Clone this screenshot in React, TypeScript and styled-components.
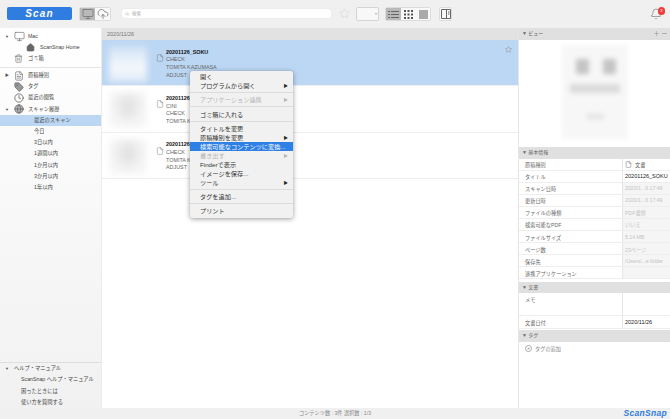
import styled, { createGlobalStyle } from 'styled-components';
import { Bell, CloudUpload, File, FileText, House, Minus, Monitor, Plus, Search, Star, Tag, Trash2, Clock, Globe } from 'lucide-react';

const GlobalStyle = createGlobalStyle`
  html, body {
    margin: 0;
    padding: 0;
    background: #fff;
  }
  * {
    box-sizing: border-box;
  }
  body {
    font-family: 'Liberation Sans', 'Noto Sans CJK JP', sans-serif;
    color: #444;
  }
`;

const Window = styled.div`
  position: relative;
  width: 670px;
  height: 419px;
  overflow: hidden;
  display: flex;
  flex-direction: column;
`;

/* toolbar */
const Toolbar = styled.header`
  height: 28px;
  flex: none;
  padding: 7px 4px 0 7px;
  background: #f0f0f0;
  display: flex;
  align-items: flex-start;
`;

const ScanButton = styled.div`
  width: 65px;
  height: 13px;
  border-radius: 2px;
  background: #2f7de0;
  color: #fff;
  font-size: 10px;
  line-height: 13px;
  font-weight: 700;
  font-style: italic;
  letter-spacing: 1.2px;
  text-align: center;
`;

const Segment = styled.div<{ $ml: number }>`
  height: 14px;
  margin-left: ${(p) => p.$ml}px;
  border: 1px solid #dcdcdc;
  border-radius: 2px;
  background: #f8f8f8;
  display: flex;
`;

const SegmentCell = styled.div<{ $on?: boolean; $w: number }>`
  width: ${(p) => p.$w}px;
  background: ${(p) => (p.$on ? '#b9b9b9' : '#f8f8f8')};
  color: #666;
  display: flex;
  align-items: center;
  justify-content: center;
`;

const SearchBox = styled.div`
  width: 209px;
  height: 9px;
  margin-left: 11px;
  margin-top: 2px;
  border-radius: 2px;
  background: #fff;
  box-shadow: 0 0 1px #ccc;
  padding-left: 3px;
  font-size: 4.5px;
  line-height: 9px;
  color: #aaa;
  display: flex;
  align-items: center;
  gap: 3px;
`;

const ToolStar = styled.div`
  margin-left: 8px;
  margin-top: 1px;
  color: #d8d8d8;
  display: flex;
`;

const SelectBox = styled.div`
  width: 23px;
  height: 14px;
  margin-left: 6px;
  border: 1px solid #d4d4d4;
  border-radius: 2px;
  background: #f8f8f8;
  color: #aaa;
  font-size: 4px;
  line-height: 12px;
  text-align: right;
  padding-right: 1px;
`;

const BellWrap = styled.div`
  position: relative;
  margin-left: auto;
  margin-top: 1px;
  margin-right: 4px;
  color: #777;
  display: flex;
`;

const Badge = styled.span`
  position: absolute;
  top: -1px;
  right: -3px;
  width: 7.5px;
  height: 7.5px;
  border-radius: 50%;
  background: #ee3b3b;
  color: #fff;
  font-size: 4px;
  line-height: 7.5px;
  text-align: center;
`;

/* three columns */
const Body = styled.div`
  flex: 1;
  min-height: 0;
  display: flex;
`;

const Sidebar = styled.aside`
  width: 102px;
  flex: none;
  background: linear-gradient(#ffffff, #f1f1f1);
  border-right: 1px solid #ececec;
  padding-top: 3px;
  display: flex;
  flex-direction: column;
`;

const NavRow = styled.div<{ $indent: number; $selected?: boolean }>`
  height: 11.2px;
  padding-left: ${(p) => p.$indent}px;
  background: ${(p) => (p.$selected ? '#bcd7f3' : 'transparent')};
  font-size: 5.25px;
  line-height: 11.2px;
  color: #444;
  white-space: nowrap;
  display: flex;
  align-items: center;
`;

const Arrow = styled.span`
  width: 9px;
  flex: none;
  font-size: 4px;
  color: #555;
`;

const NavIcon = styled.span`
  width: 14px;
  flex: none;
  color: #666;
  display: flex;
  align-items: center;
`;

const NavDivider = styled.div`
  height: 1px;
  margin: 2px 0 2.5px;
  background: #e4e4e4;
`;

const HelpBlock = styled.div`
  margin-top: auto;
  border-top: 1px solid #dedede;
  padding: 0.5px 0 0;
`;

const HelpHead = styled.div`
  padding: 0 0 0 5px;
`;

const Main = styled.main`
  flex: 1;
  min-width: 0;
  background: #fff;
`;

const DateBar = styled.div`
  height: 12px;
  padding-left: 5px;
  background: #e2e2e2;
  color: #777;
  font-size: 5.5px;
  line-height: 12px;
`;

const Item = styled.div<{ $selected?: boolean }>`
  position: relative;
  height: 46.4px;
  padding: 6px 0 0 7px;
  background: ${(p) => (p.$selected ? '#bcd7f3' : '#fff')};
  border-bottom: 1px solid #eeeeee;
  display: flex;
`;

const Thumb = styled.div<{ $selected?: boolean }>`
  width: 38px;
  height: 36px;
  flex: none;
  background: ${(p) =>
    p.$selected
      ? 'linear-gradient(#cfe1f5, #e4eef9 30%, #f4f8fc 60%, #dfeaf7)'
      : 'radial-gradient(ellipse at 50% 40%, #dfdfdf, #f3f3f3 55%, #fbfbfb)'};
  filter: blur(3px);
`;

const DocIcon = styled.div`
  width: 8px;
  margin-left: 9px;
  padding-top: 2px;
  flex: none;
  color: #777;
`;

const ItemText = styled.div`
  margin-left: 2px;
  padding-top: 2.5px;
  font-size: 5.4px;
  line-height: 7.7px;
  color: #666;
  white-space: nowrap;
`;

const ItemTitle = styled.div`
  color: #111;
  font-weight: 700;
`;

const ItemStar = styled.div`
  position: absolute;
  top: 6px;
  right: 6px;
  color: #888;
  display: flex;
`;

/* right pane */
const Inspector = styled.aside`
  width: 152px;
  flex: none;
  border-left: 1px solid #e6e6e6;
  background: #fff;
`;

const SectionHead = styled.div<{ $mt?: number }>`
  height: 11.5px;
  margin-top: ${(p) => p.$mt ?? 0}px;
  padding: 0 2px 0 3px;
  background: #e0e0e0;
  color: #666;
  font-size: 5px;
  line-height: 11.5px;
  display: flex;
  align-items: center;
  gap: 2px;
`;

const HeadTools = styled.span`
  margin-left: auto;
  color: #888;
  display: flex;
  gap: 1px;
`;

const Preview = styled.div`
  height: 106px;
  padding-top: 5px;
  display: flex;
  justify-content: center;
`;

const Page = styled.div`
  position: relative;
  width: 66px;
  height: 94px;
  background: #f7f7f7;
  filter: blur(2.5px);
`;

const Smudge = styled.span<{ $x: number; $y: number; $w: number; $h: number; $c: string }>`
  position: absolute;
  left: ${(p) => p.$x}px;
  top: ${(p) => p.$y}px;
  width: ${(p) => p.$w}px;
  height: ${(p) => p.$h}px;
  background: ${(p) => p.$c};
`;

const InfoRow = styled.div<{ $h?: number }>`
  height: ${(p) => p.$h ?? 12.1}px;
  border-bottom: 1px solid #eeeeee;
  font-size: 5.2px;
  color: #666;
  display: grid;
  grid-template-columns: 103px 1fr;
`;

const InfoLabel = styled.div`
  padding: 2.5px 0 0 6px;
  white-space: nowrap;
`;

const InfoValue = styled.div<{ $dim?: boolean; $dark?: boolean }>`
  padding: 2.5px 0 0 2px;
  border-left: 1px solid #e6e6e6;
  background: ${(p) => (p.$dim ? '#f5f5f5' : '#fff')};
  color: ${(p) => (p.$dark ? '#222' : p.$dim ? '#c4c4c4' : '#555')};
  font-size: ${(p) => (p.$dark ? 5.5 : 5.2)}px;
  white-space: nowrap;
  overflow: hidden;
  display: flex;
  gap: 3px;
`;

const AddTag = styled.div`
  padding: 3px 0 0 6px;
  color: #888;
  font-size: 5.2px;
  display: flex;
  align-items: center;
  gap: 3px;
`;

const PlusDot = styled.span`
  width: 7px;
  height: 7px;
  border: 1px solid #aaa;
  border-radius: 50%;
  font-size: 5px;
  line-height: 5px;
  text-align: center;
`;

const StatusBar = styled.footer`
  position: relative;
  height: 11px;
  flex: none;
  background: #f0f0f0;
  color: #888;
  font-size: 5.2px;
  line-height: 11px;
  text-align: center;
`;

const Logo = styled.span`
  position: absolute;
  right: 3px;
  top: 0;
  color: #2f7de0;
  font-size: 8.5px;
  font-weight: 700;
  font-style: italic;
  letter-spacing: 0.3px;
`;

/* context menu */
const Menu = styled.div`
  position: absolute;
  left: 190px;
  top: 71px;
  width: 103px;
  height: 147px;
  padding-top: 1px;
  border-radius: 3px;
  background: #f1f1f1;
  box-shadow: 0 1px 5px rgba(0, 0, 0, 0.4);
`;

const MenuRow = styled.div<{ $active?: boolean; $disabled?: boolean }>`
  height: 9px;
  padding: 0 5px 0 10px;
  background: ${(p) => (p.$active ? '#2f80e4' : 'transparent')};
  color: ${(p) => (p.$active ? '#fff' : p.$disabled ? '#b5b5b5' : '#333')};
  font-size: 6.2px;
  line-height: 9px;
  white-space: nowrap;
  overflow: hidden;
  display: flex;
  justify-content: space-between;
`;

const Caret = styled.span<{ $disabled?: boolean }>`
  font-size: 4.5px;
  color: ${(p) => (p.$disabled ? '#b5b5b5' : '#222')};
`;

const MenuSep = styled.div`
  height: 1px;
  margin: 2.15px 0;
  background: #dcdcdc;
`;

const history = ['最近のスキャン', '今日', '3日以内', '1週間以内', '1か月以内', '3か月以内', '1年以内'];

const items = [
  { lines: ['CHECK', 'TOMITA KAZUMASA', 'ADJUST'], selected: true },
  { lines: ['CINI', 'CHECK', 'TOMITA KAZUMASA'], selected: false },
  { lines: ['CHECK', 'TOMITA KAZUMASA', 'ADJUST'], selected: false },
];

const info = [
  ['タイトル', '20201126_SOKU', 'dark'],
  ['スキャン日時', '2020/1...6 17:49', 'dim'],
  ['更新日時', '2020/1...6 17:49', 'dim'],
  ['ファイルの種類', 'PDF書類', 'dim'],
  ['検索可能なPDF', 'いいえ', 'dim'],
  ['ファイルサイズ', '5.14 MB', 'dim'],
  ['ページ数', '23ページ', 'dim'],
  ['保存先', '/Users/...e folder', 'dim'],
  ['連携アプリケーション', '', 'dim'],
];

export default function App() {
  return (
    <Window>
      <GlobalStyle />
      <Toolbar>
        <ScanButton>Scan</ScanButton>
        <Segment $ml={7}>
          <SegmentCell $on $w={15}>
            <Monitor size={12} strokeWidth={1.3} />
          </SegmentCell>
          <SegmentCell $w={15}>
            <CloudUpload size={12} strokeWidth={1.4} />
          </SegmentCell>
        </Segment>
        <SearchBox>
          <Search size={4} strokeWidth={2} />
          検索
        </SearchBox>
        <ToolStar>
          <Star size={11} strokeWidth={1.5} />
        </ToolStar>
        <SelectBox>▾</SelectBox>
        <Segment $ml={6}>
          <SegmentCell $on $w={15}>
            <svg width="11" height="9" viewBox="0 0 11 9" fill="none" stroke="#666">
              <path d="M0 1.5h2M3 1.5h8M0 4.5h2M3 4.5h8M0 7.5h2M3 7.5h8" />
            </svg>
          </SegmentCell>
          <SegmentCell $w={15}>
            <svg width="9" height="9" viewBox="0 0 9 9" fill="#555">
              <path d="M0 0h2v2H0zM3.5 0h2v2h-2zM7 0h2v2H7zM0 3.5h2v2H0zM3.5 3.5h2v2h-2zM7 3.5h2v2H7zM0 7h2v2H0zM3.5 7h2v2h-2zM7 7h2v2H7z" />
            </svg>
          </SegmentCell>
          <SegmentCell $w={14}>
            <svg width="9" height="9" viewBox="0 0 9 9">
              <rect width="9" height="9" fill="#aaa" />
            </svg>
          </SegmentCell>
        </Segment>
        <Segment $ml={8}>
          <SegmentCell $w={11}>
            <svg width="10" height="10" viewBox="0 0 10 10" fill="none" stroke="#666">
              <path d="M.5.5h9v9h-9zM5.5.5v9" />
              <path d="M7 3h1.5M7 5h1.5" />
            </svg>
          </SegmentCell>
        </Segment>
        <BellWrap>
          <Bell size={12} strokeWidth={1.3} />
          <Badge>3</Badge>
        </BellWrap>
      </Toolbar>

      <Body>
        <Sidebar>
          <NavRow $indent={5}>
            <Arrow>▼</Arrow>
            <NavIcon>
              <Monitor size={11} strokeWidth={1.4} />
            </NavIcon>
            Mac
          </NavRow>
          <NavRow $indent={26}>
            <NavIcon>
              <House size={9} strokeWidth={2} fill="#666" />
            </NavIcon>
            ScanSnap Home
          </NavRow>
          <NavRow $indent={14}>
            <NavIcon>
              <Trash2 size={9} strokeWidth={1.6} />
            </NavIcon>
            ゴミ箱
          </NavRow>
          <NavDivider />
          <NavRow $indent={5}>
            <Arrow>▶</Arrow>
            <NavIcon>
              <FileText size={10} strokeWidth={1.6} />
            </NavIcon>
            原稿種別
          </NavRow>
          <NavRow $indent={14}>
            <NavIcon>
              <Tag size={10} strokeWidth={1.8} fill="#999" />
            </NavIcon>
            タグ
          </NavRow>
          <NavRow $indent={14}>
            <NavIcon>
              <Clock size={10} strokeWidth={2} />
            </NavIcon>
            最近の閲覧
          </NavRow>
          <NavRow $indent={5}>
            <Arrow>▼</Arrow>
            <NavIcon>
              <Globe size={10} strokeWidth={2} fill="#bbb" />
            </NavIcon>
            スキャン履歴
          </NavRow>
          {history.map((label, i) => (
            <NavRow key={label} $indent={34} $selected={i === 0}>
              {label}
            </NavRow>
          ))}
          <HelpBlock>
            <HelpHead>
              <NavRow $indent={0}>
                <Arrow>▼</Arrow>
                <span>ヘルプ・マニュアル</span>
              </NavRow>
            </HelpHead>
            <NavRow $indent={21}>ScanSnap ヘルプ・マニュアル</NavRow>
            <NavRow $indent={21}>困ったときには</NavRow>
            <NavRow $indent={21}>使い方を質問する</NavRow>
          </HelpBlock>
        </Sidebar>

        <Main>
          <DateBar>2020/11/26</DateBar>
          {items.map((item, i) => (
            <Item key={i} $selected={item.selected}>
              <Thumb $selected={item.selected} />
              <DocIcon>
                <File size={8} strokeWidth={1.4} />
              </DocIcon>
              <ItemText>
                <ItemTitle>20201126_SOKU</ItemTitle>
                {item.lines.map((line) => (
                  <div key={line}>{line}</div>
                ))}
              </ItemText>
              {item.selected && (
                <ItemStar>
                  <Star size={7} strokeWidth={1.5} />
                </ItemStar>
              )}
            </Item>
          ))}
        </Main>

        <Inspector>
          <SectionHead>
            ▼ ビュー
            <HeadTools>
              <Plus size={7} strokeWidth={1.5} />
              <Minus size={7} strokeWidth={2} />
            </HeadTools>
          </SectionHead>
          <Preview>
            <Page>
              <Smudge $x={14} $y={14} $w={13} $h={15} $c="#c4c4c4" />
              <Smudge $x={41} $y={14} $w={13} $h={15} $c="#c4c4c4" />
              <Smudge $x={8} $y={39} $w={50} $h={9} $c="#dadada" />
              <Smudge $x={25} $y={69} $w={17} $h={5} $c="#e2e2e2" />
            </Page>
          </Preview>
          <SectionHead $mt={1.5}>▼ 基本情報</SectionHead>
          <InfoRow>
            <InfoLabel>原稿種別</InfoLabel>
            <InfoValue>
              <File size={7} strokeWidth={1.4} />
              文書
            </InfoValue>
          </InfoRow>
          {info.map(([label, value, kind]) => (
            <InfoRow key={label}>
              <InfoLabel>{label}</InfoLabel>
              <InfoValue $dim={kind === 'dim'} $dark={kind === 'dark'}>
                {value}
              </InfoValue>
            </InfoRow>
          ))}
          <SectionHead $mt={2.5}>▼ 文書</SectionHead>
          <InfoRow $h={23}>
            <InfoLabel>メモ</InfoLabel>
            <InfoValue />
          </InfoRow>
          <InfoRow>
            <InfoLabel>文書日付</InfoLabel>
            <InfoValue $dark>2020/11/26</InfoValue>
          </InfoRow>
          <SectionHead $mt={1.5}>▼ タグ</SectionHead>
          <AddTag>
            <PlusDot>+</PlusDot>
            タグの追加
          </AddTag>
        </Inspector>
      </Body>

      <StatusBar>
        コンテンツ数 : 3件 選択数 : 1/3
        <Logo>ScanSnap</Logo>
      </StatusBar>

      <Menu>
        <MenuRow>開く</MenuRow>
        <MenuRow>
          プログラムから開く<Caret>▶</Caret>
        </MenuRow>
        <MenuSep />
        <MenuRow $disabled>
          アプリケーション連携<Caret $disabled>▶</Caret>
        </MenuRow>
        <MenuSep />
        <MenuRow>ゴミ箱に入れる</MenuRow>
        <MenuSep />
        <MenuRow>タイトルを変更</MenuRow>
        <MenuRow>
          原稿種別を変更<Caret>▶</Caret>
        </MenuRow>
        <MenuRow $active>検索可能なコンテンツに変換...</MenuRow>
        <MenuRow $disabled>
          書き出す<Caret $disabled>▶</Caret>
        </MenuRow>
        <MenuRow>Finderで表示</MenuRow>
        <MenuRow>イメージを保存...</MenuRow>
        <MenuRow>
          ツール<Caret>▶</Caret>
        </MenuRow>
        <MenuSep />
        <MenuRow>タグを追加...</MenuRow>
        <MenuSep />
        <MenuRow>プリント</MenuRow>
      </Menu>
    </Window>
  );
}
